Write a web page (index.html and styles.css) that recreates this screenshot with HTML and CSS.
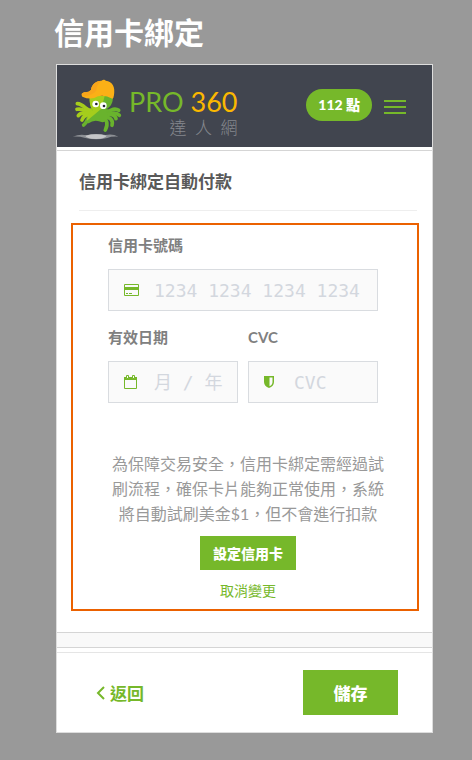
FILE: index.html
```
<!DOCTYPE html>
<html lang="zh-Hant">
<head>
  <meta charset="UTF-8" />
  <meta name="viewport" content="width=device-width, initial-scale=1.0" />
  <title>信用卡綁定</title>
  <link rel="stylesheet" href="styles.css">
</head>
<body>

<h1 class="page-title">信用卡綁定</h1>

<div class="screen">
  <header class="topbar">
    <a class="logo" href="#">
      <!-- 章魚吉祥物 -->
      <svg class="mascot" viewBox="18 15 153 186" aria-hidden="true">
        <path d="M20 188 Q42 179 62 184 Q90 176 118 183 Q140 178 157 188 Q135 187 124 192 Q90 200 58 192 Q40 187 20 188Z" fill="#8d9095" />
        <path d="M58 185 Q90 177 122 185 Q118 194 90 195 Q60 194 58 185Z" fill="#c5c6c8" />
        <g fill="none" stroke="#a5cd1c" stroke-width="11" stroke-linecap="round">
          <path d="M76 108 C62 114 55 90 34 89" />
          <path d="M74 113 C58 117 52 101 33 106" />
          <path d="M76 118 C58 122 48 110 37 125" />
          <path d="M80 124 C62 120 52 126 48 138" />
        </g>
        <g fill="none" stroke="#69b32d" stroke-width="11" stroke-linecap="round">
          <path d="M115 110 C134 118 140 96 158 109" />
          <path d="M116 116 C134 126 145 108 160 124" />
          <path d="M115 124 C132 118 148 122 150 134" />
          <path d="M110 130 C130 127 143 136 138 154" />
          <path d="M105 132 C124 132 127 150 118 168" />
          <path d="M77 127 C61 130 66 145 53 153" />
        </g>
        <path d="M71 66 L140 66 C143 84 134 99 121 106 L126 132 Q118 145 109 145 Q85 134 68 148 Q60 149 64 134 L80 110 C72 99 70 84 71 66Z" fill="#69b32d" />
        <path d="M71 66 L116 66 L106 104 Q86 121 62 141 L67 117 L80 109 C72 99 70 84 71 66Z" fill="#a5cd1c" />
        <circle cx="89" cy="90" r="10" fill="#fff" />
        <circle cx="112" cy="95" r="10" fill="#fff" />
        <circle cx="91" cy="90" r="4" fill="#202431" />
        <circle cx="114" cy="96" r="4" fill="#202431" />
        <path d="M75 48 C77 29 93 20 107 20 C111 15 117 17 119 20 C140 23 148 39 144 63 Q143 73 139 74 Q117 62 96 67 Q75 80 49 68 Q42 58 55 55 Q68 56 75 48Z" fill="#fbb016" />
        <path d="M75 48 C77 29 93 20 107 20 Q91 32 91 50 Q79 64 52 67 Q43 59 55 55 Q68 56 75 48Z" fill="#f8a51b" />
      </svg>
      <span class="logo-text">
        <span class="brand">PRO <span class="brand-num">360</span></span>
        <span class="brand-sub">達&ensp;人&ensp;網</span>
      </span>
    </a>
    <a class="points" href="#">112 點</a>
    <button class="menu-btn" type="button" aria-label="選單">
      <span></span><span></span><span></span>
    </button>
  </header>

  <main class="content">
    <h2 class="section-title">信用卡綁定自動付款</h2>

    <form class="card-box">
      <div class="fields">
        <div class="field field-wide">
          <label for="cardNumber">信用卡號碼</label>
          <div class="input-wrap">
            <svg class="icon" viewBox="0 0 16 16" aria-hidden="true">
              <path d="M0.500 2.500h14v11h-14z" fill="none" stroke="#76b82a" />
              <path d="M0 5h15v3H0zM2 11h2v1H2zM5 11h3v1H5z" fill="#76b82a" />
            </svg>
            <input type="text" id="cardNumber" inputmode="numeric" placeholder="1234 1234 1234 1234" />
          </div>
        </div>
        <div class="field">
          <label for="expiry">有效日期</label>
          <div class="input-wrap">
            <svg class="icon" viewBox="0 0 16 16" aria-hidden="true">
              <path d="M0.500 3.500h12v11h-12z" fill="none" stroke="#76b82a" />
              <path d="M0 3h13v3H0z" fill="#76b82a" />
              <path d="M2.500 1.500h2v3h-2zM8.500 1.500h2v3h-2z" fill="#fafafa" stroke="#76b82a" />
            </svg>
            <input type="text" id="expiry" placeholder="月 / 年" />
          </div>
        </div>
        <div class="field">
          <label for="cvc">CVC</label>
          <div class="input-wrap">
            <svg class="icon" viewBox="0 0 16 16" aria-hidden="true">
              <path d="M0 2h10v6c0 3-2 5-5 6c-3-1-5-3-5-6z" fill="#76b82a" />
              <path d="M5.500 3.500H8.500V8c0 2-1 3.200-3 4.200z" fill="#fafafa" />
            </svg>
            <input type="text" id="cvc" inputmode="numeric" placeholder="CVC" />
          </div>
        </div>
      </div>

      <div class="notice">
        <p>為保障交易安全，信用卡綁定需經過試刷流程，確保卡片能夠正常使用，系統將自動試刷美金$1，但不會進行扣款</p>
        <button class="btn btn-small" type="submit">設定信用卡</button>
        <a class="cancel" href="#">取消變更</a>
      </div>
    </form>
  </main>

  <div class="divider"></div>

  <footer class="bottom-bar">
    <a class="back" href="#">
      <svg class="chevron" viewBox="0 0 9 14" aria-hidden="true">
        <path d="M8 1L2 7l6 6" fill="none" stroke="#76b82a" stroke-width="2" />
      </svg>
      返回
    </a>
    <button class="btn btn-save" type="button">儲存</button>
  </footer>
</div>

</body>
</html>
```

FILE: styles.css
```
* {
  box-sizing: border-box;
}

body {
  margin: 0;
  padding: 12px 39px 27px 56px;
  background: #999;
  font-family: Lato, "Noto Sans CJK TC", sans-serif;
  font-size: 16px;
}

a {
  color: #76b82a;
  text-decoration: none;
}

.page-title {
  margin: 0 0 12px -2px;
  color: #fff;
  font-size: 30px;
  line-height: 40px;
}

.screen {
  background: #fff;
  border: 1px solid #ddd;
}

.topbar {
  display: flex;
  align-items: flex-start;
  height: 82px;
  padding: 14px 26px 0 15px;
  background: #41454f;
}

.logo {
  display: flex;
  gap: 6px;
  margin-right: auto;
}

.mascot {
  width: 51px;
  height: 62px;
}

.logo-text {
  display: flex;
  flex-direction: column;
  padding-top: 8px;
  text-align: right;
}

.brand {
  font-size: 27px;
  line-height: 30px;
}

.brand-num {
  color: #fbb800;
}

.brand-sub {
  color: #85888e;
  font-size: 17px;
  font-weight: 300;
  line-height: 22px;
}

.points {
  height: 32px;
  margin: 10px 12px 0 0;
  padding: 0 12px;
  border-radius: 16px;
  background: #76b82a;
  color: #fff;
  font-size: 14px;
  font-weight: 900;
  line-height: 32px;
}

.menu-btn {
  display: flex;
  flex-direction: column;
  gap: 4px;
  width: 22px;
  margin-top: 21px;
  padding: 0;
  border: none;
  background: none;
  cursor: pointer;
}

.menu-btn span {
  width: 100%;
  height: 2px;
  background: #76b82a;
}

.content {
  margin-top: 3px;
  padding: 0 13px 21px 14px;
  border-top: 1px solid #d5d5d5;
}

.section-title {
  margin: 0 2px 12px 8px;
  padding: 18px 0 16px;
  border-bottom: 1px solid #eee;
  color: #595959;
  font-size: 17px;
  line-height: 25px;
}

.card-box {
  padding-bottom: 6px;
  border: 2px solid #eb6100;
}

.fields {
  display: grid;
  grid-template-columns: repeat(2, minmax(0, 1fr));
  gap: 14px 10px;
  padding: 8px 39px 0 35px;
}

.field-wide {
  grid-column: 1 / 3;
}

.field label {
  display: block;
  margin-bottom: 12px;
  color: #808080;
  font-size: 15px;
  font-weight: bold;
  line-height: 24px;
}

.input-wrap {
  display: flex;
  align-items: center;
  gap: 14px;
  height: 42px;
  padding-left: 15px;
  border: 1px solid #d9dce0;
  background: #fafafa;
}

.icon {
  flex: none;
  width: 16px;
  height: 16px;
}

.input-wrap input {
  flex: 1;
  min-width: 0;
  height: 40px;
  padding: 0;
  border: none;
  outline: none;
  background: none;
  font-family: "DejaVu Sans Mono", "Noto Sans CJK TC", monospace;
  font-size: 18px;
}

.input-wrap input::placeholder {
  color: #d3d7de;
}

.notice {
  display: flex;
  flex-direction: column;
  align-items: center;
  padding: 48px 33px 0 39px;
}

.notice p {
  margin: 0 0 10px;
  color: #999;
  line-height: 25px;
  text-align: center;
}

.btn {
  padding: 0;
  border: none;
  background: #76b82a;
  color: #fff;
  font-family: inherit;
  font-weight: 900;
  cursor: pointer;
}

.btn-small {
  width: 96px;
  height: 34px;
  font-size: 14px;
}

.cancel {
  margin-top: 8px;
  font-size: 14px;
  line-height: 25px;
}

.divider {
  height: 16px;
  border: 1px solid #d5d5d5;
  border-width: 1px 0;
  background: #f9f9f9;
}

.bottom-bar {
  display: flex;
  justify-content: space-between;
  align-items: center;
  height: 80px;
  margin-top: 4px;
  padding: 0 34px 0 39px;
  border-top: 1px solid #e5e5e5;
}

.back {
  display: flex;
  align-items: center;
  gap: 5px;
  font-size: 17px;
  font-weight: bold;
}

.chevron {
  width: 9px;
  height: 14px;
}

.btn-save {
  width: 95px;
  height: 45px;
  font-size: 17px;
}
```
